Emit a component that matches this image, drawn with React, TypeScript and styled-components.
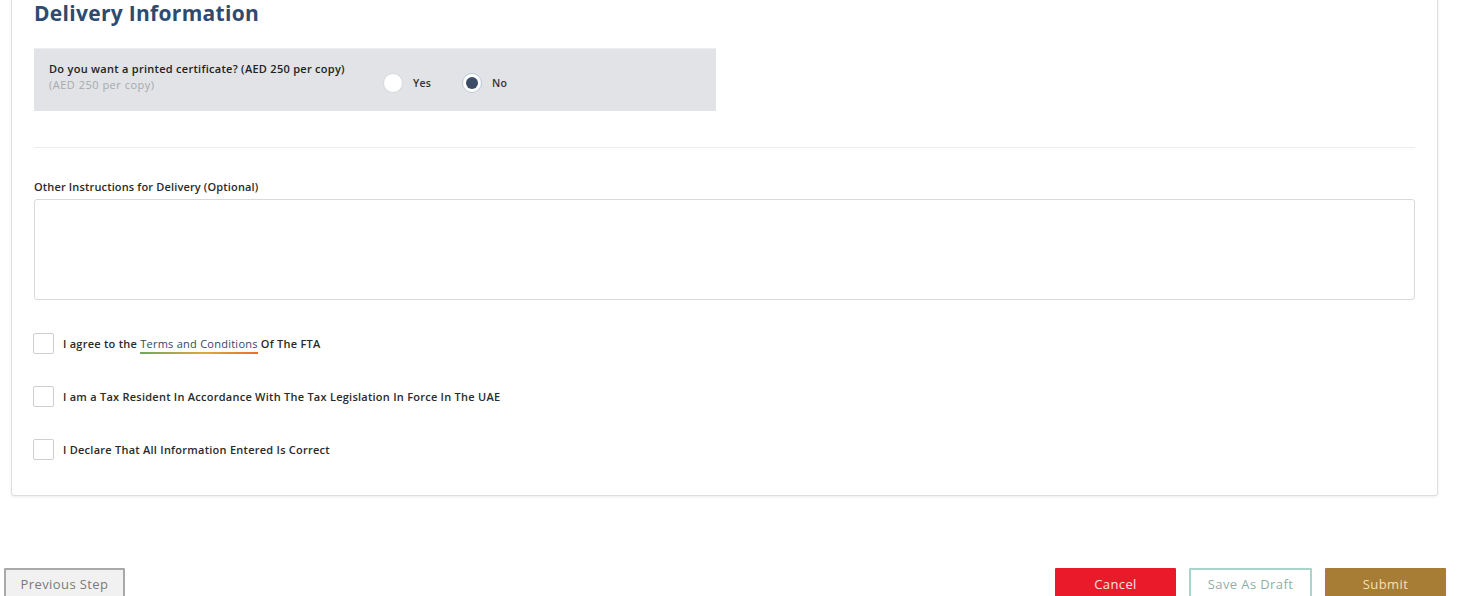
import React, { useState } from 'react';
import styled, { createGlobalStyle } from 'styled-components';

const GlobalStyle = createGlobalStyle`
  html, body {
    margin: 0;
    padding: 0;
    background: #ffffff;
    overflow: hidden;
  }
  body {
    font-family: "Open Sans", "Liberation Sans", Arial, sans-serif;
    color: #2a2a2a;
  }
`;

const Page = styled.div`
  width: 1462px;
  height: 596px;
  display: flex;
  flex-direction: column;
`;

const Card = styled.section`
  margin: -20px 0 0 11px;
  width: 1427px;
  box-sizing: border-box;
  background: #fff;
  border: 1px solid #dedede;
  border-radius: 3px;
  box-shadow: 0 1px 3px rgba(0, 0, 0, 0.08);
  padding: 19px 22px 35px 22px;
`;

const Title = styled.h2`
  margin: 0;
  font-size: 21px;
  line-height: 26px;
  font-weight: 700;
  color: #2d4b70;
  letter-spacing: 0.3px;
`;

const QuestionBox = styled.div`
  margin-top: 22px;
  width: 682px;
  height: 63px;
  box-sizing: border-box;
  background: #e1e3e6;
  border-top: 1px solid #eceef0;
  display: flex;
  align-items: center;
  padding: 0 15px;
`;

const QuestionText = styled.div`
  width: 334px;
  display: flex;
  flex-direction: column;
  gap: 1px;
  margin-top: -8px;
`;

const QuestionMain = styled.span`
  font-size: 11px;
  font-weight: 600;
  letter-spacing: 0.28px;
  color: #222;
`;

const QuestionSub = styled.span`
  font-size: 11px;
  letter-spacing: 0.5px;
  color: #a6a9ad;
`;

const RadioGroup = styled.div`
  display: flex;
  align-items: center;
  gap: 31px;
  margin-top: 6px;
`;

const RadioOption = styled.label`
  display: flex;
  align-items: center;
  gap: 10px;
  font-size: 10.5px;
  font-weight: 600;
  letter-spacing: 0.2px;
  color: #333;
  cursor: pointer;
`;

const RadioCircle = styled.span<{ $checked: boolean }>`
  width: 20px;
  height: 20px;
  box-sizing: border-box;
  border-radius: 50%;
  background: #fff;
  border: 1.5px solid ${(p) => (p.$checked ? '#b9c8d8' : '#d5d8dc')};
  display: flex;
  align-items: center;
  justify-content: center;

  &::after {
    content: '';
    width: 12px;
    height: 12px;
    border-radius: 50%;
    background: ${(p) => (p.$checked ? '#3c4e67' : 'transparent')};
  }
`;

const Divider = styled.hr`
  margin: 36px 0 0 0;
  border: 0;
  border-top: 1px solid #ececec;
`;

const FieldLabel = styled.label`
  display: block;
  margin-top: 31px;
  font-size: 11px;
  font-weight: 600;
  letter-spacing: 0.15px;
  color: #2a2a2a;
`;

const TextArea = styled.textarea`
  display: block;
  margin-top: 5px;
  width: 100%;
  height: 101px;
  box-sizing: border-box;
  border: 1.5px solid #d9d9d9;
  border-radius: 3px;
  resize: none;
  font-family: inherit;
  outline: none;
`;

const Checks = styled.div`
  margin-top: 33px;
  display: flex;
  flex-direction: column;
  gap: 32px;
`;

const CheckRow = styled.label`
  display: flex;
  align-items: center;
  gap: 9px;
  font-size: 11px;
  font-weight: 600;
  letter-spacing: 0.25px;
  color: #2a2a2a;
  cursor: pointer;
`;

const CheckBox = styled.span<{ $checked: boolean }>`
  width: 21px;
  height: 21px;
  box-sizing: border-box;
  border: 1.5px solid #cfcfcf;
  border-radius: 2px;
  background: ${(p) => (p.$checked ? '#2d4b70' : '#fff')};
  margin-left: -1px;
`;

const TermsLink = styled.a`
  color: #34466a;
  font-weight: 500;
  text-decoration: none;
  padding-bottom: 3px;
  margin-right: 3px;
  background: linear-gradient(to right, #6fa85a, #e0a83a 55%, #e8702e) left bottom / 100% 2px no-repeat;
`;

const Footer = styled.div`
  margin-top: 72px;
  padding: 0 16px 0 4px;
  display: flex;
  align-items: flex-start;
  justify-content: space-between;
`;

const Actions = styled.div`
  display: flex;
  gap: 13px;
`;

const Button = styled.button<{ $variant: 'prev' | 'cancel' | 'draft' | 'submit' }>`
  height: 36px;
  width: ${(p) => (p.$variant === 'draft' ? '123px' : '121px')};
  box-sizing: border-box;
  font-family: inherit;
  font-size: 13px;
  letter-spacing: 0.4px;
  cursor: pointer;
  padding: 0 0 4px 0;
  border-radius: 1px;
  ${(p) =>
    p.$variant === 'prev'
      ? `background:#f1f1f1;border:2px solid #a9a9a9;color:#7a7a7a;`
      : p.$variant === 'cancel'
      ? `background:#ea1a2b;border:2px solid #ea1a2b;color:#fde3e3;`
      : p.$variant === 'draft'
      ? `background:#fff;border:2px solid #a9d4c9;color:#8cb1a8;`
      : `background:#a77c35;border:2px solid #a77c35;color:#f3e1b3;`}
`;

export default function App() {
  const [printed, setPrinted] = useState<'yes' | 'no'>('no');
  const [checks, setChecks] = useState([false, false, false]);

  const toggle = (i: number) =>
    setChecks((c) => c.map((v, j) => (j === i ? !v : v)));

  return (
    <>
      <GlobalStyle />
      <Page>
        <Card>
          <Title>Delivery Information</Title>

          <QuestionBox>
            <QuestionText>
              <QuestionMain>Do you want a printed certificate? (AED 250 per copy)</QuestionMain>
              <QuestionSub>(AED 250 per copy)</QuestionSub>
            </QuestionText>
            <RadioGroup>
              <RadioOption onClick={() => setPrinted('yes')}>
                <RadioCircle $checked={printed === 'yes'} />
                Yes
              </RadioOption>
              <RadioOption onClick={() => setPrinted('no')}>
                <RadioCircle $checked={printed === 'no'} />
                No
              </RadioOption>
            </RadioGroup>
          </QuestionBox>

          <Divider />

          <FieldLabel>Other Instructions for Delivery (Optional)</FieldLabel>
          <TextArea />

          <Checks>
            <CheckRow onClick={() => toggle(0)}>
              <CheckBox $checked={checks[0]} />
              <span>
                I agree to the <TermsLink href="#">Terms and Conditions</TermsLink>Of The FTA
              </span>
            </CheckRow>
            <CheckRow onClick={() => toggle(1)}>
              <CheckBox $checked={checks[1]} />
              <span>I am a Tax Resident In Accordance With The Tax Legislation In Force In The UAE</span>
            </CheckRow>
            <CheckRow onClick={() => toggle(2)}>
              <CheckBox $checked={checks[2]} />
              <span>I Declare That All Information Entered Is Correct</span>
            </CheckRow>
          </Checks>
        </Card>

        <Footer>
          <Button $variant="prev">Previous Step</Button>
          <Actions>
            <Button $variant="cancel">Cancel</Button>
            <Button $variant="draft">Save As Draft</Button>
            <Button $variant="submit">Submit</Button>
          </Actions>
        </Footer>
      </Page>
    </>
  );
}
